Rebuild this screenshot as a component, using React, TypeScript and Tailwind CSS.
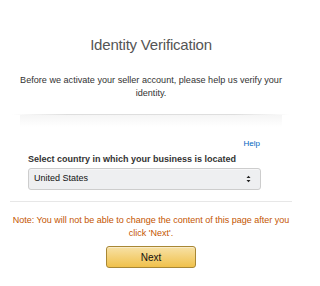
export default function App() {
  return (
    <div className="w-[302px] h-[286px] bg-white overflow-hidden font-['Liberation_Sans',Arial,sans-serif]">
      <div className="pt-[35px] text-center">
        <h1 className="text-[15px] leading-[19px] tracking-[-0.2px] text-[#555]">Identity Verification</h1>
        <p className="mt-[20px] px-[14px] text-[9.1px] leading-[13px] text-[#333]">
          Before we activate your seller account, please help us verify your identity.
        </p>
      </div>

      <div className="mt-[14px] mx-[12px] h-[1px] bg-[linear-gradient(to_right,transparent,#dedede_20%,#dedede_80%,transparent)]" />
      <div className="mx-[20px] h-[12px] bg-[linear-gradient(to_bottom,#f5f5f5,white)]" />

      <div className="px-[28px] pt-[12px]">
        <div className="flex justify-end pr-[14px]">
          <a className="text-[8px] leading-[10px] text-[#0066c0]">Help</a>
        </div>
        <label className="mt-[5px] block text-[9px] leading-[11px] font-bold text-[#333]">
          Select country in which your business is located
        </label>
        <div className="mt-[3px] w-[233px] h-[22px] flex items-center justify-between pl-[5px] pr-[9px] rounded-[3px] border border-[#cdcdcd] bg-[#eeeff1] shadow-[0_1px_0_rgba(255,255,255,0.5)_inset]">
          <span className="text-[9px] text-[#111]">United States</span>
          <svg width="5" height="8" viewBox="0 0 5 8">
            <path d="M0.5 3 L2.5 0.8 L4.5 3 Z" fill="#222" />
            <path d="M0.5 5 L2.5 7.2 L4.5 5 Z" fill="#222" />
          </svg>
        </div>
      </div>

      <div className="mt-[11px] mx-[10px] h-[1px] bg-[#e7e7e7]" />

      <p className="mt-[12px] px-[10px] text-center text-[9px] leading-[13px] text-[#c45500]">
        Note: You will not be able to change the content of this page after you click 'Next'.
      </p>

      <div className="mt-[6px] flex justify-center">
        <button className="w-[90px] h-[22px] rounded-[3px] border border-[#a88734] bg-[linear-gradient(to_bottom,#f7e1a6,#f0c14b)] text-[10px] text-[#111] shadow-[0_1px_0_rgba(255,255,255,0.4)_inset]">
          Next
        </button>
      </div>
    </div>
  );
}
